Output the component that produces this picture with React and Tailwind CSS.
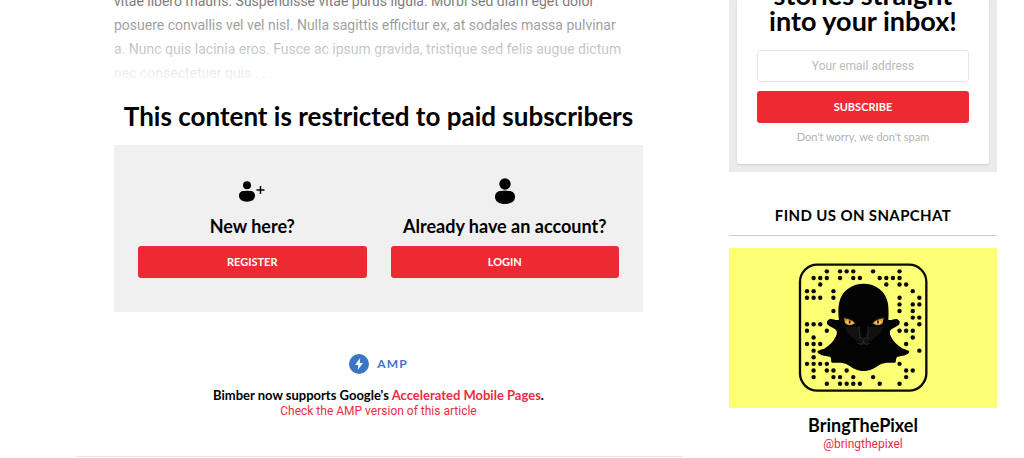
const dots = [
  [3, 5, 6, 7, 10, 14],
  [1, 2, 3, 5, 7, 8, 11, 12, 13, 14],
  [2, 12, 14, 15],
  [0, 1, 4, 16],
  [0, 1, 2, 4, 14, 17],
  [14, 16, 17],
  [4, 14, 16],
  [16, 17],
  [0, 1, 2, 15, 17],
  [0, 3, 14, 15, 16],
  [1, 16],
  [0, 1, 2, 15],
  [1, 17],
  [1],
  [0, 1, 2, 3, 14],
  [1, 3, 4, 6, 15, 16],
  [1, 4, 5, 7, 10, 15],
  [3, 5, 6, 7, 8, 11, 14],
];

const display = "font-['Lato',sans-serif] font-bold";

function Snapcode() {
  return (
    <svg viewBox="0 0 438 438" className="size-[146px]" role="img" aria-label="Snapcode">
      <rect x="30" y="29" width="379" height="378" rx="52" fill="none" stroke="#0b0b05" strokeWidth="7" />
      {dots.map((cols, r) =>
        cols.map((c) => (
          <circle key={`${r}-${c}`} cx={51 + c * 19.83} cy={49 + r * 19.83} r="6.6" fill="#0b0b05" />
        ))
      )}
      <path
        d="M221 86 C256 86 288 108 294 146 C296 162 296 180 295 194 C303 198 312 190 320 192 C330 195 332 205 325 211 C316 218 304 221 300 228 C296 240 312 264 334 278 C343 284 355 284 358 290 C357 299 338 303 322 305 C316 310 320 319 315 323 C300 324 284 320 268 330 C252 341 240 348 221 348 C202 348 190 341 174 330 C158 320 142 324 126 323 C121 319 126 310 120 305 C104 303 85 299 82 290 C85 284 98 284 107 278 C129 264 144 240 140 228 C136 221 124 218 115 211 C108 205 110 195 120 192 C128 190 139 198 147 194 C145 180 144 162 147 146 C153 108 186 86 221 86 Z"
        fill="#030303"
      />
      <path d="M163 213 C180 221 200 212 207 216 L214 250 L221 256 L229 250 L237 216 C247 212 264 221 281 213 C276 234 260 243 250 252 L221 271 L192 252 C181 243 168 234 163 213Z" fill="#121112" />
      <path d="M206 249 Q213 246 221 253 Q229 246 236 249 M221 253 V264 M221 264 Q213 272 204 265 M221 264 Q229 272 238 265" fill="none" stroke="#343234" strokeWidth="3" />
      <path d="M208 214 Q206 232 211 245 M234 214 Q236 232 231 245" fill="none" stroke="#252325" strokeWidth="4" />
      <path d="M162 190 C174 191 187 195 195 205 C186 213 169 212 165 204Z" fill="#d5922d" />
      <path d="M281 190 C269 191 256 195 248 205 C257 213 274 212 278 204Z" fill="#d5922d" />
      <path d="M166 199 C175 194 184 198 190 204 C180 209 171 207 166 199Z" fill="#f7cd5c" />
      <path d="M277 199 C268 194 259 198 253 204 C263 209 272 207 277 199Z" fill="#f7cd5c" />
      <ellipse cx="179" cy="201" rx="3" ry="5" fill="#2b1a08" />
      <ellipse cx="264" cy="201" rx="3" ry="5" fill="#2b1a08" />
      <path d="M159 189 C174 186 189 195 198 207 M284 189 C269 186 254 195 245 207" fill="none" stroke="#383437" strokeWidth="2" />
    </svg>
  );
}

function PersonAdd() {
  return (
    <svg viewBox="0 0 28 22" className="h-[22px] w-7" aria-hidden="true">
      <circle cx="9" cy="5.3" r="4" />
      <path d="M6 11 Q9 10.300 12 11 C15.500 11 17 13 17 16 C17 19.500 13.500 21.700 9 21.700 C4.500 21.700 1 19.500 1 16 C1 13 2.500 11 6 11Z" />
      <path d="M22.500 6V14M18.500 10H26.500" fill="none" stroke="black" strokeWidth="1.500" />
    </svg>
  );
}

function Person() {
  return (
    <svg viewBox="0 0 22 28" className="h-7 w-[22px]" aria-hidden="true">
      <circle cx="11" cy="7" r="5.700" />
      <path d="M7 14 Q11 13 15 14 C19 14 21 16.500 21 20 C21 24.500 16.500 27 11 27 C5.500 27 1 24.500 1 20 C1 16.500 3 14 7 14Z" />
    </svg>
  );
}

function AccountOption({ icon, title, action }) {
  return (
    <section className="flex flex-1 flex-col items-center">
      <div className="flex h-7 items-center">{icon}</div>
      <h3 className={`${display} mt-[9px] text-lg leading-6`}>{title}</h3>
      <button className={`${display} mt-2 h-8 w-full rounded-[3px] bg-[#ed2a32] text-[11px] text-white`}>{action}</button>
    </section>
  );
}

export default function App() {
  return (
    <div className="flex items-start bg-white pr-[27px] pl-[76px] font-[Roboto,sans-serif] text-black">
      <main className="mr-[46px] min-w-0 flex-1 border-b border-[#e6e6e6]">
        <div className="mr-10 ml-[38px] pb-[37px]">
          <div className="relative -mt-[11px]">
            <p className="text-sm leading-6 text-[#666]">
              vitae libero mauris. Suspendisse vitae purus ligula. Morbi sed diam eget dolor<br />
              posuere convallis vel vel nisl. Nulla sagittis efficitur ex, at sodales massa pulvinar<br />
              a. Nunc quis lacinia eros. Fusce ac ipsum gravida, tristique sed felis augue dictum<br />
              nec consectetuer quis . . .
            </p>
            <div className="absolute inset-0 bg-linear-to-b from-transparent to-white" />
          </div>
          <h2 className={`${display} mt-[15px] text-center text-[26px] leading-8 whitespace-nowrap`}>
            This content is restricted to paid subscribers
          </h2>
          <div className="mt-[13px] flex gap-6 bg-[#f0f0f0] px-6 pt-8 pb-[34px]">
            <AccountOption icon={<PersonAdd />} title="New here?" action="REGISTER" />
            <AccountOption icon={<Person />} title="Already have an account?" action="LOGIN" />
          </div>
          <div className="mt-[42px] flex flex-col items-center">
            <div className={`${display} flex items-center gap-2 text-xs tracking-widest text-[#3b76c4]`}>
              <svg viewBox="0 0 20 20" className="size-5" aria-hidden="true">
                <circle cx="10" cy="10" r="10" fill="#3b76c4" />
                <path d="M11.200 4L6 11H9.300L8.700 16L14 9H10.700Z" fill="white" />
              </svg>
              AMP
            </div>
            <p className={`${display} mt-[13px] text-[13px] leading-4`}>
              Bimber now supports Google's <a href="#amp" className="text-[#e92d45]">Accelerated Mobile Pages</a>.
            </p>
            <a href="#version" className="text-xs leading-4 text-[#e92d45]">Check the AMP version of this article</a>
          </div>
        </div>
      </main>
      <aside className="w-[268px] shrink-0">
        <div className="bg-[#ebebeb] px-2 pb-2">
          <form className="flex flex-col rounded-b-[3px] bg-white px-5 pb-[19px] text-center shadow-sm">
            <h2 className={`${display} -mt-[18px] text-[27px] leading-[26px]`}>stories straight<br />into your inbox!</h2>
            <input type="email" aria-label="Your email address" placeholder="Your email address" className="mt-4 h-8 w-full rounded-[3px] border border-[#e6e6e6] text-center text-xs placeholder:text-[#bbb]" />
            <button className={`${display} mt-[9px] h-8 rounded-[3px] bg-[#ed2a32] text-[11px] text-white`}>SUBSCRIBE</button>
            <p className="mt-1.5 font-['Lato',sans-serif] text-[11px] leading-4 text-[#b3b3b3]">Don't worry, we don't spam</p>
          </form>
        </div>
        <h2 className={`${display} mt-[31px] border-b border-[#ccc] pb-2 text-center text-[15px] leading-6 tracking-wide`}>FIND US ON SNAPCHAT</h2>
        <div className="mt-3 flex h-40 items-center justify-center bg-[#fdff74]"><Snapcode /></div>
        <h3 className={`${display} mt-1.5 text-center text-lg leading-[22px]`}>BringThePixel</h3>
        <a href="#snapchat" className="block text-center text-xs leading-4 text-[#e92d45]">@bringthepixel</a>
      </aside>
    </div>
  );
}
